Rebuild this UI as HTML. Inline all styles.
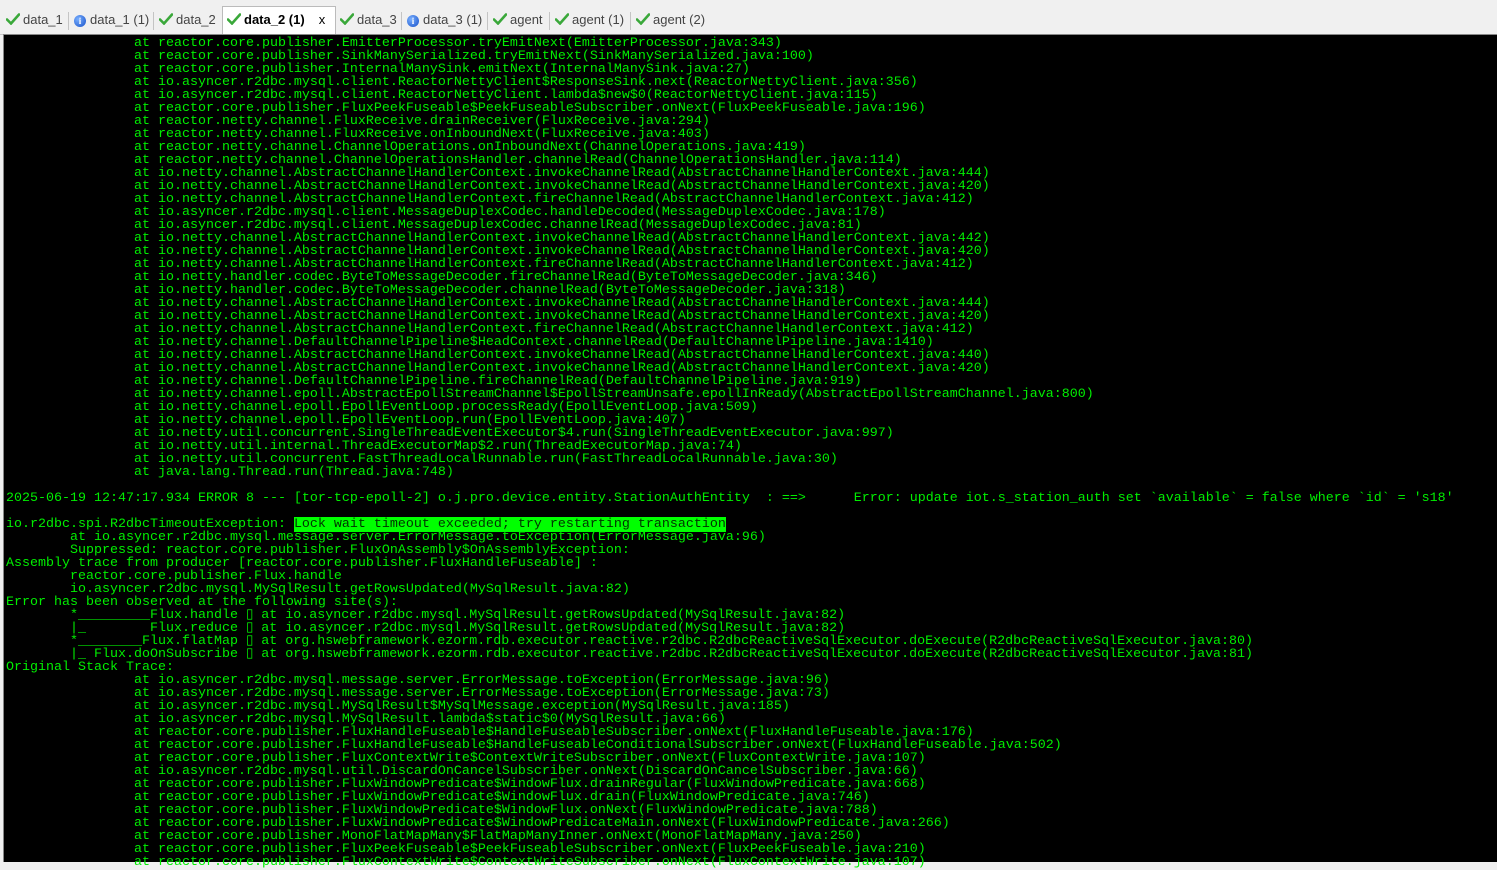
<!DOCTYPE html>
<html><head><meta charset="utf-8"><style>
html,body{margin:0;padding:0;width:1497px;height:861px;overflow:hidden;background:#f0f0f0;font-family:"Liberation Sans",sans-serif}
.tabs{position:absolute;left:0;top:0;width:1497px;height:34px;background:#f0f0f0;border-bottom:1px solid #c8c8c8}
.tab{position:absolute;top:8px;height:26px;font-size:13px;color:#444;line-height:24px;white-space:nowrap}
.tab.act{top:6px;height:28px;background:#fff;border:1px solid #bbb;border-bottom:none;color:#000;font-weight:bold;line-height:26px;padding:0 4px 0 4px}
.sep{position:absolute;top:12px;width:1px;height:18px;background:#c4c4c4}
.ck{display:inline-block;width:14px;height:12px;vertical-align:-1px;margin-right:3px}
.info{display:inline-block;width:12px;height:12px;border-radius:50%;background:radial-gradient(circle at 35% 35%,#7ab0ff,#1650c8);color:#fff;font-size:9px;line-height:12px;text-align:center;font-weight:bold;vertical-align:-1px;margin-right:4px;font-family:"Liberation Serif",serif;position:relative;top:-1px}
.term{position:absolute;left:3px;top:34px;width:1494px;height:827px;background:#000;border-left:1px solid #888;border-top:1px solid #888}
pre{margin:0;position:absolute;left:2px;top:2px;font-family:"Liberation Mono",monospace;font-size:13.33px;line-height:13px;color:#00ee00}
.hl{background:#00ff00;color:#003300}
</style></head><body>
<div class="tabs">
<svg width="0" height="0" style="position:absolute"><defs><symbol id="c" viewBox="0 0 14 12"><path d="M1 6.5 L5 10.5 L13 1.5" fill="none" stroke="#3aa83a" stroke-width="2.6" stroke-linecap="round"/></symbol></defs></svg>
<div class="tab" style="left:6px"><svg class="ck"><use href="#c"/></svg>data_1</div>
<div class="sep" style="left:68px"></div>
<div class="tab" style="left:74px"><span class="info">i</span>data_1 (1)</div>
<div class="sep" style="left:153px"></div>
<div class="tab" style="left:159px"><svg class="ck"><use href="#c"/></svg>data_2</div>
<div class="tab act" style="left:222px;width:104px"><svg class="ck"><use href="#c"/></svg>data_2 (1)<span style="font-weight:normal;margin-left:14px">x</span></div>
<div class="tab" style="left:340px"><svg class="ck"><use href="#c"/></svg>data_3</div>
<div class="sep" style="left:401px"></div>
<div class="tab" style="left:407px"><span class="info">i</span>data_3 (1)</div>
<div class="sep" style="left:487px"></div>
<div class="tab" style="left:493px"><svg class="ck"><use href="#c"/></svg>agent</div>
<div class="sep" style="left:549px"></div>
<div class="tab" style="left:555px"><svg class="ck"><use href="#c"/></svg>agent (1)</div>
<div class="sep" style="left:630px"></div>
<div class="tab" style="left:636px"><svg class="ck"><use href="#c"/></svg>agent (2)</div>
</div>
<div class="term"><pre>                at reactor.core.publisher.EmitterProcessor.tryEmitNext(EmitterProcessor.java:343)
                at reactor.core.publisher.SinkManySerialized.tryEmitNext(SinkManySerialized.java:100)
                at reactor.core.publisher.InternalManySink.emitNext(InternalManySink.java:27)
                at io.asyncer.r2dbc.mysql.client.ReactorNettyClient$ResponseSink.next(ReactorNettyClient.java:356)
                at io.asyncer.r2dbc.mysql.client.ReactorNettyClient.lambda$new$0(ReactorNettyClient.java:115)
                at reactor.core.publisher.FluxPeekFuseable$PeekFuseableSubscriber.onNext(FluxPeekFuseable.java:196)
                at reactor.netty.channel.FluxReceive.drainReceiver(FluxReceive.java:294)
                at reactor.netty.channel.FluxReceive.onInboundNext(FluxReceive.java:403)
                at reactor.netty.channel.ChannelOperations.onInboundNext(ChannelOperations.java:419)
                at reactor.netty.channel.ChannelOperationsHandler.channelRead(ChannelOperationsHandler.java:114)
                at io.netty.channel.AbstractChannelHandlerContext.invokeChannelRead(AbstractChannelHandlerContext.java:444)
                at io.netty.channel.AbstractChannelHandlerContext.invokeChannelRead(AbstractChannelHandlerContext.java:420)
                at io.netty.channel.AbstractChannelHandlerContext.fireChannelRead(AbstractChannelHandlerContext.java:412)
                at io.asyncer.r2dbc.mysql.client.MessageDuplexCodec.handleDecoded(MessageDuplexCodec.java:178)
                at io.asyncer.r2dbc.mysql.client.MessageDuplexCodec.channelRead(MessageDuplexCodec.java:81)
                at io.netty.channel.AbstractChannelHandlerContext.invokeChannelRead(AbstractChannelHandlerContext.java:442)
                at io.netty.channel.AbstractChannelHandlerContext.invokeChannelRead(AbstractChannelHandlerContext.java:420)
                at io.netty.channel.AbstractChannelHandlerContext.fireChannelRead(AbstractChannelHandlerContext.java:412)
                at io.netty.handler.codec.ByteToMessageDecoder.fireChannelRead(ByteToMessageDecoder.java:346)
                at io.netty.handler.codec.ByteToMessageDecoder.channelRead(ByteToMessageDecoder.java:318)
                at io.netty.channel.AbstractChannelHandlerContext.invokeChannelRead(AbstractChannelHandlerContext.java:444)
                at io.netty.channel.AbstractChannelHandlerContext.invokeChannelRead(AbstractChannelHandlerContext.java:420)
                at io.netty.channel.AbstractChannelHandlerContext.fireChannelRead(AbstractChannelHandlerContext.java:412)
                at io.netty.channel.DefaultChannelPipeline$HeadContext.channelRead(DefaultChannelPipeline.java:1410)
                at io.netty.channel.AbstractChannelHandlerContext.invokeChannelRead(AbstractChannelHandlerContext.java:440)
                at io.netty.channel.AbstractChannelHandlerContext.invokeChannelRead(AbstractChannelHandlerContext.java:420)
                at io.netty.channel.DefaultChannelPipeline.fireChannelRead(DefaultChannelPipeline.java:919)
                at io.netty.channel.epoll.AbstractEpollStreamChannel$EpollStreamUnsafe.epollInReady(AbstractEpollStreamChannel.java:800)
                at io.netty.channel.epoll.EpollEventLoop.processReady(EpollEventLoop.java:509)
                at io.netty.channel.epoll.EpollEventLoop.run(EpollEventLoop.java:407)
                at io.netty.util.concurrent.SingleThreadEventExecutor$4.run(SingleThreadEventExecutor.java:997)
                at io.netty.util.internal.ThreadExecutorMap$2.run(ThreadExecutorMap.java:74)
                at io.netty.util.concurrent.FastThreadLocalRunnable.run(FastThreadLocalRunnable.java:30)
                at java.lang.Thread.run(Thread.java:748)

2025-06-19 12:47:17.934 ERROR 8 --- [tor-tcp-epoll-2] o.j.pro.device.entity.StationAuthEntity  : ==>      Error: update iot.s_station_auth set `available` = false where `id` = 's18'

io.r2dbc.spi.R2dbcTimeoutException: <span class="hl">Lock wait timeout exceeded; try restarting transaction</span>
        at io.asyncer.r2dbc.mysql.message.server.ErrorMessage.toException(ErrorMessage.java:96)
        Suppressed: reactor.core.publisher.FluxOnAssembly$OnAssemblyException: 
Assembly trace from producer [reactor.core.publisher.FluxHandleFuseable] :
        reactor.core.publisher.Flux.handle
        io.asyncer.r2dbc.mysql.MySqlResult.getRowsUpdated(MySqlResult.java:82)
Error has been observed at the following site(s):
        *_________Flux.handle ▯ at io.asyncer.r2dbc.mysql.MySqlResult.getRowsUpdated(MySqlResult.java:82)
        |_        Flux.reduce ▯ at io.asyncer.r2dbc.mysql.MySqlResult.getRowsUpdated(MySqlResult.java:82)
        *________Flux.flatMap ▯ at org.hswebframework.ezorm.rdb.executor.reactive.r2dbc.R2dbcReactiveSqlExecutor.doExecute(R2dbcReactiveSqlExecutor.java:80)
        |_ Flux.doOnSubscribe ▯ at org.hswebframework.ezorm.rdb.executor.reactive.r2dbc.R2dbcReactiveSqlExecutor.doExecute(R2dbcReactiveSqlExecutor.java:81)
Original Stack Trace:
                at io.asyncer.r2dbc.mysql.message.server.ErrorMessage.toException(ErrorMessage.java:96)
                at io.asyncer.r2dbc.mysql.message.server.ErrorMessage.toException(ErrorMessage.java:73)
                at io.asyncer.r2dbc.mysql.MySqlResult$MySqlMessage.exception(MySqlResult.java:185)
                at io.asyncer.r2dbc.mysql.MySqlResult.lambda$static$0(MySqlResult.java:66)
                at reactor.core.publisher.FluxHandleFuseable$HandleFuseableSubscriber.onNext(FluxHandleFuseable.java:176)
                at reactor.core.publisher.FluxHandleFuseable$HandleFuseableConditionalSubscriber.onNext(FluxHandleFuseable.java:502)
                at reactor.core.publisher.FluxContextWrite$ContextWriteSubscriber.onNext(FluxContextWrite.java:107)
                at io.asyncer.r2dbc.mysql.util.DiscardOnCancelSubscriber.onNext(DiscardOnCancelSubscriber.java:66)
                at reactor.core.publisher.FluxWindowPredicate$WindowFlux.drainRegular(FluxWindowPredicate.java:668)
                at reactor.core.publisher.FluxWindowPredicate$WindowFlux.drain(FluxWindowPredicate.java:746)
                at reactor.core.publisher.FluxWindowPredicate$WindowFlux.onNext(FluxWindowPredicate.java:788)
                at reactor.core.publisher.FluxWindowPredicate$WindowPredicateMain.onNext(FluxWindowPredicate.java:266)
                at reactor.core.publisher.MonoFlatMapMany$FlatMapManyInner.onNext(MonoFlatMapMany.java:250)
                at reactor.core.publisher.FluxPeekFuseable$PeekFuseableSubscriber.onNext(FluxPeekFuseable.java:210)
                at reactor.core.publisher.FluxContextWrite$ContextWriteSubscriber.onNext(FluxContextWrite.java:107)
</pre></div>
</body></html>
